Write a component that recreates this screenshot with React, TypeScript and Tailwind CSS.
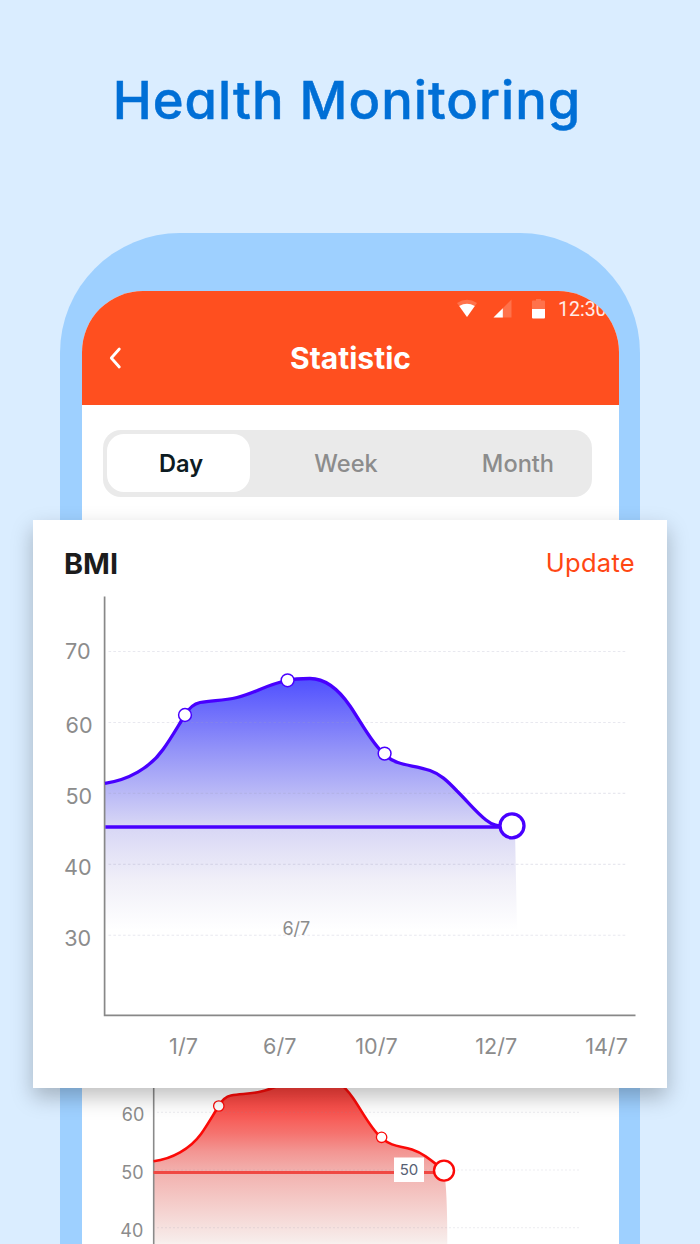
import React from 'react'

const bmiLine =
  'M105 783.3 C128 780 150 768 163 749.5 C172 737 178 726 185 715 C189 708 193 704 200 702.5 C212 700 222 701 237 697.5 C256 693 265 685 287 680.5 C293 679 303 678.5 310 678.5 C325 678.5 339 690 350 706 C361 722 372 744 384.6 754.5 C398 767 412 764 430 770.5 C440 774 447 780.5 457 791 C469 803 476 812 486 820 C492 825 497 826.5 512 826'

const redLine =
  'M153.5 1161.3 C172 1159 190 1149 201 1134 C208 1124 213 1115 218.7 1106 C222 1100 226 1096.5 231 1095.5 C241 1093.5 249 1094.5 261 1091.5 C277 1088 284 1081 302 1077.5 C307 1076.5 315 1076 320.5 1076 C333 1076 344 1085 353 1098 C362 1111 371 1129 381.5 1138 C393 1147.5 400 1145.5 412 1149.5 C424 1153.5 432 1161 444 1170.5'

const yLabels = [
  { text: '70', x: 65, y: 658.5 },
  { text: '60', x: 65.6, y: 733 },
  { text: '50', x: 65.4, y: 804 },
  { text: '40', x: 64, y: 875 },
  { text: '30', x: 64.2, y: 946 },
]

const xLabels = [
  { text: '1/7', x: 183.5 },
  { text: '6/7', x: 279.7 },
  { text: '10/7', x: 376.5 },
  { text: '12/7', x: 496.3 },
  { text: '14/7', x: 606.5 },
]

function StatusBar() {
  return (
    <div className="flex h-[35px] items-center pl-[375px]">
      <svg width="20" height="19" viewBox="0 0 20 19" className="shrink-0">
        <path d="M0 4 Q10 -2.6 20 4 L10 18 Z" fill="white" fillOpacity=".2" />
        <path d="M2.2 7 Q10 2.4 17.8 7 L10 18 Z" fill="white" />
      </svg>
      <svg width="19" height="19" viewBox="0 0 19 19" className="ml-4 shrink-0">
        <path d="M18.5 .5 V18.5 H.5 Z" fill="white" fillOpacity=".2" />
        <path d="M9.8 9.2 V18.5 H.5 Z" fill="white" />
      </svg>
      <svg width="13" height="20" viewBox="0 0 13 20" className="ml-5 shrink-0">
        <path d="M4 0 H9 V1.6 H12 Q13 1.6 13 2.6 V10 H0 V2.6 Q0 1.6 1 1.6 H4 Z" fill="white" fillOpacity=".2" />
        <path d="M0 10 H13 V18.6 Q13 19.6 12 19.6 H1 Q0 19.6 0 18.6 Z" fill="white" />
      </svg>
      <span className="ml-[13px] pt-0.5 font-['Roboto'] text-[19.5px] font-normal text-white/90">12:30</span>
    </div>
  )
}

function RedChart() {
  return (
    <svg width="537" height="204" viewBox="82 1040 537 204" className="block shrink-0">
      <defs>
        <linearGradient id="red" x1="0" y1="1076" x2="0" y2="1255" gradientUnits="userSpaceOnUse">
          <stop offset="0" stopColor="#fc3530" />
          <stop offset=".2" stopColor="#f8544f" />
          <stop offset=".32" stopColor="#f5736f" />
          <stop offset=".42" stopColor="#f39592" />
          <stop offset=".53" stopColor="#f2b0ad" />
          <stop offset=".92" stopColor="#f7ecea" />
          <stop offset="1" stopColor="#fff" />
        </linearGradient>
      </defs>
      <path d={`${redLine} Q447.5 1190 447.3 1250 H153.5 Z`} fill="url(#red)" />
      <g stroke="#8c8ca5" strokeOpacity=".17" strokeWidth="1" strokeDasharray="2 2">
        <path d="M157 1112.3 H579 M157 1170 H579 M157 1227.7 H579" />
      </g>
      <path d="M153.7 1040 V1244" stroke="#8a8a8a" strokeWidth="1.6" />
      <path d={redLine} fill="none" stroke="#fb0a08" strokeWidth="2.6" />
      <path d="M153.5 1172.5 H444" stroke="#f04843" strokeWidth="2.8" />
      <g fill="white" stroke="#fb0a08">
        <circle cx="218.8" cy="1106" r="5.2" strokeWidth="1.3" />
        <circle cx="381.6" cy="1137.3" r="5.2" strokeWidth="1.3" />
        <circle cx="444" cy="1170.6" r="10" strokeWidth="2.4" />
      </g>
      <rect x="394" y="1157.5" width="30" height="24.5" fill="white" />
      <text x="409" y="1175" textAnchor="middle" fontSize="15" fill="#566073" className="font-['Inter']">50</text>
      <g fill="#8c8c8c" fontSize="18" className="font-['Inter']">
        <text x="121.8" y="1121.3">60</text>
        <text x="121.2" y="1179">50</text>
        <text x="120.3" y="1236.8">40</text>
      </g>
    </svg>
  )
}

function BmiCard() {
  return (
    <section className="absolute top-[520px] left-[33px] h-[567.5px] w-[634px] bg-white shadow-[0_9px_20px_rgba(0,0,0,0.25)]">
      <div className="flex h-[70px] items-center justify-between pt-[18px] pr-8 pl-[31px]">
        <h2 className="text-[28.8px] font-bold text-[#1c1c1c]">BMI</h2>
        <button className="pb-0.5 text-[25.5px] tracking-[0.3px] text-[#ff4713]">Update</button>
      </div>
      <svg width="634" height="497" viewBox="33 590 634 497" className="block">
        <defs>
          <linearGradient id="violet" x1="0" y1="678" x2="0" y2="930" gradientUnits="userSpaceOnUse">
            <stop offset="0" stopColor="#4f4fff" />
            <stop offset=".28" stopColor="#9292f8" />
            <stop offset=".58" stopColor="#d6d5f5" />
            <stop offset=".8" stopColor="#f0eff8" />
            <stop offset="1" stopColor="#fff" />
          </linearGradient>
        </defs>
        <path d={`${bmiLine} L515 830 L517 930 H105 Z`} fill="url(#violet)" />
        <path
          d="M108.5 651.5 H626 M108.5 722.5 H626 M108.5 793.4 H626 M108.5 864.4 H626 M108.5 935.3 H626"
          stroke="#a0a0be"
          strokeOpacity=".24"
          strokeWidth="1.1"
          strokeDasharray="2.6 2.25"
        />
        <path d="M104.6 596.5 V1015.4 H635.5" fill="none" stroke="#888" strokeWidth="1.7" />
        <path d={bmiLine} fill="none" stroke="#4800ff" strokeWidth="3.3" />
        <path d="M105.4 827 H505" stroke="#4800ff" strokeWidth="3.5" />
        <g fill="white" stroke="#4800ff">
          <circle cx="185" cy="715" r="6.4" strokeWidth="1.5" />
          <circle cx="287.6" cy="680.3" r="6.4" strokeWidth="1.5" />
          <circle cx="384.6" cy="753.6" r="6.4" strokeWidth="1.5" />
          <circle cx="512" cy="825.8" r="12" strokeWidth="3.3" />
        </g>
        <g fill="#8c8c8c" fontSize="21.6">
          {yLabels.map((l) => (
            <text key={l.text} x={l.x} y={l.y}>{l.text}</text>
          ))}
          {xLabels.map((l) => (
            <text key={l.text} x={l.x} y="1054" textAnchor="middle">{l.text}</text>
          ))}
          <text x="296.3" y="935" fontSize="18" textAnchor="middle">6/7</text>
        </g>
      </svg>
    </section>
  )
}

export default function App() {
  return (
    <main className="relative flex h-[1244px] w-[700px] flex-col items-center overflow-hidden bg-[#daedff] font-['Inter',sans-serif]">
      <h1 className="flex h-[233px] shrink-0 items-start pt-[62px] pr-1.5 text-[52.5px] leading-[76px] font-medium tracking-[1px] whitespace-nowrap text-[#006fd6] [-webkit-text-stroke:0.5px_#006fd6] [font-feature-settings:'cv11','ss03']">
        Health Monitoring
      </h1>
      <div className="flex w-[580px] flex-1 flex-col rounded-t-[120px] bg-[#9ed0ff] pt-[58px] pr-[21px] pl-[22px]">
        <div className="flex flex-1 flex-col overflow-hidden rounded-t-[61px] bg-white">
          <header className="h-[114px] shrink-0 bg-[#ff4f1f]">
            <StatusBar />
            <div className="grid h-[63px] grid-cols-[80px_1fr_80px] items-center">
              <svg width="14" height="24" viewBox="0 0 14 24" className="ml-[26px]">
                <path d="M11.3 3 L3.3 12 L11.3 21" fill="none" stroke="white" strokeWidth="2.8" strokeLinecap="round" strokeLinejoin="round" />
              </svg>
              <span className="pt-0.5 text-center text-[30px] font-bold text-white">Statistic</span>
            </div>
          </header>
          <nav className="mt-[24.5px] ml-[21px] flex h-[67px] w-[489px] shrink-0 items-center rounded-[18px] bg-[#eaeaea] pl-1 text-[23.6px] font-medium text-[#8c8c8c]">
            <span className="flex h-[57.5px] w-36 items-center justify-center rounded-[17px] bg-white pt-0.5 pl-[5px] font-semibold text-[#0d1b22]">Day</span>
            <span className="w-[191px] pt-0.5 pl-0.5 text-center">Week</span>
            <span className="w-[153px] pt-0.5 pl-1 text-center">Month</span>
          </nav>
          <div className="min-h-0 flex-1" />
          <RedChart />
        </div>
      </div>
      <BmiCard />
    </main>
  )
}
